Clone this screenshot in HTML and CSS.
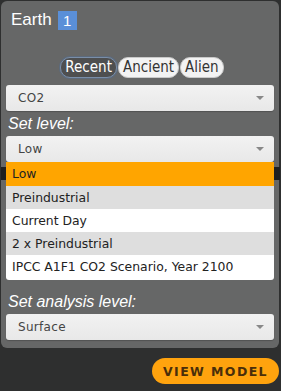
FILE: index.html
```html
<!DOCTYPE html>
<html lang="en">
<head>
  <meta charset="utf-8" />
  <title>Earth</title>
  <link rel="stylesheet" href="styles.css">
</head>
<body>
  <div class="panel">
    <h1 class="title">Earth <span class="badge">1</span></h1>

    <div class="tabs">
      <button class="tab active">Recent</button>
      <button class="tab">Ancient</button>
      <button class="tab">Alien</button>
    </div>

    <div class="select">CO2<span class="arrow"></span></div>

    <label class="label">Set level:</label>
    <div class="select-wrap">
      <div class="select">Low<span class="arrow"></span></div>
      <ul class="options">
        <li class="selected">Low</li>
        <li class="alt">Preindustrial</li>
        <li>Current Day</li>
        <li class="alt">2 x Preindustrial</li>
        <li>IPCC A1F1 CO2 Scenario, Year 2100</li>
      </ul>
    </div>
    <div class="hidden-row"></div>

    <label class="label analysis">Set analysis level:</label>
    <div class="select">Surface<span class="arrow"></span></div>
  </div>

  <div class="actions">
    <button class="btn">VIEW MODEL</button>
  </div>
</body>
</html>
```

FILE: styles.css
```css
body {
  margin: 0;
  background-color: #2e2f2f;
  font-family: 'Liberation Sans', Arial, sans-serif;
  width: 281px;
  height: 391px;
  overflow: hidden;
}

.panel {
  margin: 1px 2px 0 1px;
  padding: 9px 5px 8px 5px;
  background-color: #666767;
  border-radius: 6px;
}

.title {
  margin: 0 0 0 5px;
  font-size: 17px;
  font-weight: normal;
  color: #fff;
  line-height: 20px;
  display: flex;
  align-items: center;
  gap: 6px;
}

.badge {
  display: inline-block;
  background-color: #5a8fd8;
  color: #fff;
  font-size: 15px;
  width: 19px;
  height: 19px;
  line-height: 19px;
  text-align: center;
}

.tabs {
  display: flex;
  justify-content: center;
  gap: 1px;
  margin-top: 27px;
  margin-left: 4px;
}

.tab {
  font-family: 'DejaVu Sans', sans-serif;
  font-stretch: condensed;
  font-size: 15px;
  height: 21px;
  padding: 0 4px;
  border: 1px solid #c9c9c9;
  border-radius: 10px;
  background-color: #f3f3f3;
  color: #333;
  line-height: 19px;
}

.tab.active {
  background-color: #4e4f50;
  color: #fff;
  border-color: #7a8ea8;
  box-shadow: 0 0 0 1px #5c6a7c;
}

.select {
  position: relative;
  height: 26px;
  margin-top: 7px;
  padding-left: 12px;
  border-radius: 3px;
  background: linear-gradient(#f2f2f2, #e8e8e8);
  box-shadow: 0 1px 1px rgba(0, 0, 0, 0.2);
  font-family: 'DejaVu Sans', sans-serif;
  font-size: 12px;
  letter-spacing: 0.3px;
  color: #444;
  line-height: 26px;
}

.arrow {
  position: absolute;
  right: 10px;
  top: 11px;
  border-left: 4px solid transparent;
  border-right: 4px solid transparent;
  border-top: 4px solid #888;
}

.label {
  display: block;
  margin: 4px 0 0 2px;
  font-size: 16px;
  font-style: italic;
  color: #fff;
  line-height: 17px;
}

.label + .select,
.label + .select-wrap .select {
  margin-top: 4px;
}

.select-wrap {
  position: relative;
  z-index: 2;
}

.options {
  position: absolute;
  left: 0;
  right: 0;
  top: 100%;
  margin: 0;
  padding: 0 0 2px 0;
  list-style: none;
  background-color: #fff;
  border-radius: 0 0 3px 3px;
  font-family: 'DejaVu Sans', sans-serif;
  font-size: 12.4px;
  color: #222;
}

.options li {
  height: 23px;
  line-height: 23px;
  padding-left: 6px;
}

.options li.alt {
  background-color: #dedede;
}

.options li.selected {
  background-color: #ffa500;
  height: 24px;
  line-height: 24px;
}

.hidden-row {
  height: 13px;
  margin: 5px -6px 0 -5px;
  background-color: #1f2020;
}

.analysis {
  margin-top: 113px;
}

.actions {
  display: flex;
  justify-content: flex-end;
  margin: 10px 2px 0 0;
}

.btn {
  height: 26px;
  width: 127px;
  border: none;
  border-radius: 13px;
  background-color: #ffa30e;
  color: #4a2e0a;
  font-family: 'DejaVu Sans', Verdana, sans-serif;
  font-size: 12.5px;
  font-weight: bold;
  letter-spacing: 1.4px;
}
```
